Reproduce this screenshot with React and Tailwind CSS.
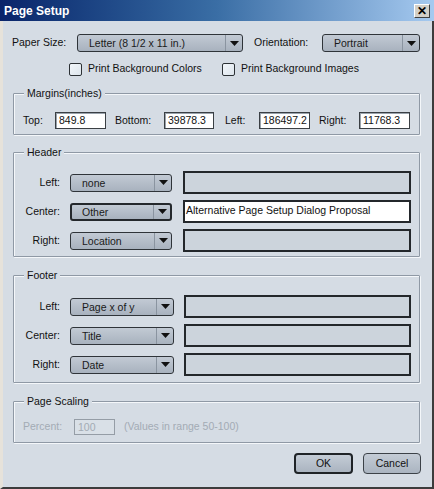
import React from 'react'

const FONT = "font-['Liberation_Sans',Arial,sans-serif]"

function Arrow() {
  return (
    <svg width="9" height="5" viewBox="0 0 9 5">
      <path d="M0 0 H9 L4.5 5 Z" fill="#111" />
    </svg>
  )
}

function Combo({ value, width, focused }) {
  return (
    <div
      className={`flex h-[18px] ${width} items-stretch rounded-[3px] ${
        focused ? 'border-2 border-[#24282c]' : 'border border-[#2f3439]'
      } bg-gradient-to-b from-[#c2cad4] to-[#a8b2be]`}
    >
      <span className={`flex-1 truncate ${focused ? 'pl-[10px] leading-[14px]' : 'pl-[11px] leading-[16px]'} text-[#1a1a1a]`}>
        {value}
      </span>
      <span className="flex w-[17px] items-center justify-center border-l border-[#8a94a0]">
        <Arrow />
      </span>
    </div>
  )
}

function Checkbox({ label }) {
  return (
    <label className="flex items-center">
      <span className="h-[13px] w-[13px] rounded-[2px] border border-[#2c3135] bg-gradient-to-br from-[#f2f6fa] to-[#dde5ec]" />
      <span className="ml-[6px] text-[#111]">{label}</span>
    </label>
  )
}

function Group({ title, className, children }) {
  return (
    <div
      className={`relative rounded-[1px] border border-[#8f99a5] shadow-[inset_1px_1px_0_#f4f7fa,1px_1px_0_#f4f7fa] ${className}`}
    >
      <span className="absolute -top-[8px] left-[10px] bg-[#d5dce4] px-[3px] leading-[14px] text-[#111]">
        {title}
      </span>
      {children}
    </div>
  )
}

function MarginField({ label, labelW, ml, inputW, value }) {
  return (
    <div className={`flex items-center ${ml}`}>
      <span className={`${labelW} text-[#111]`}>{label}</span>
      <span
        className={`h-[17px] ${inputW} border border-[#3a3f44] bg-white pl-[3px] leading-[15px] text-[#111] shadow-[inset_1px_1px_0_#9aa3ac]`}
      >
        {value}
      </span>
    </div>
  )
}

function SlotRow({ label, value, text, focused, comboW, fieldW, fieldMl }) {
  return (
    <div className="flex h-[23px] items-center">
      <span className="w-[46px] text-right text-[#111]">{label}</span>
      <div className="ml-[10px]">
        <Combo value={value} width={comboW} focused={focused} />
      </div>
      <div
        className={`${fieldMl} h-[23px] ${fieldW} border-2 border-[#23272b] ${
          text ? 'bg-white' : 'bg-[#ccd4dc]'
        } pl-[1px] leading-[17px] text-[#111]`}
      >
        {text}
      </div>
    </div>
  )
}

export default function App() {
  return (
    <div
      className={`${FONT} flex h-[489px] w-[434px] flex-col border-b-2 border-l-[3px] border-r-2 border-b-[#3c3c3c] border-l-[#e6e2da] border-r-[#3c3c3c] bg-[#d5dce4] text-[10.5px]`}
    >
      {/* title bar */}
      <div className="-ml-[3px] -mr-[2px] flex h-[21px] shrink-0 items-center justify-between bg-gradient-to-r from-[#0a246a] via-[#3a6ea5] to-[#a6caf0] pl-[4px] pr-[4px]">
        <span className="text-[12px] font-bold text-white">Page Setup</span>
        <span className="flex h-[14px] w-[16px] items-center justify-center border border-t-white border-l-white border-r-[#404040] border-b-[#404040] bg-[#d4d0c8] text-[12px] font-bold leading-none text-black">
          ✕
        </span>
      </div>

      <div className="flex flex-1 flex-col pl-[10px] pr-[12px]">
        {/* paper size / orientation */}
        <div className="-ml-px mt-[13px] flex h-[18px] items-center">
          <span className="w-[65px] text-[#111]">Paper Size:</span>
          <Combo value="Letter (8 1/2 x 11 in.)" width="w-[166px]" />
          <span className="ml-[11px] w-[68px] text-[#111]">Orientation:</span>
          <Combo value="Portrait" width="w-[98px]" />
        </div>

        {/* checkboxes */}
        <div className="ml-[56px] mt-[10px] flex h-[14px] items-center">
          <div className="w-[153px]">
            <Checkbox label="Print Background Colors" />
          </div>
          <Checkbox label="Print Background Images" />
        </div>

        {/* margins */}
        <Group title="Margins(inches)" className="mt-[17px] pb-[5px] pl-[9px] pt-[18px]">
          <div className="flex h-[17px] items-center">
            <MarginField label="Top:" labelW="w-[32px]" ml="" inputW="w-[51px]" value="849.8" />
            <MarginField label="Bottom:" labelW="w-[49px]" ml="ml-[9px]" inputW="w-[50px]" value="39878.3" />
            <MarginField label="Left:" labelW="w-[34px]" ml="ml-[11px]" inputW="w-[51px]" value="186497.2" />
            <MarginField label="Right:" labelW="w-[40px]" ml="ml-[9px]" inputW="w-[51px]" value="11768.3" />
          </div>
        </Group>

        {/* header */}
        <Group title="Header" className="mt-[17px] flex flex-col gap-[6px] pb-[4px] pt-[18px]">
          <SlotRow label="Left:" value="none" comboW="w-[102px]" fieldW="w-[228px]" fieldMl="ml-[11px]" />
          <SlotRow
            label="Center:"
            value="Other"
            focused
            text="Alternative Page Setup Dialog Proposal"
            comboW="w-[102px]"
            fieldW="w-[228px]"
            fieldMl="ml-[11px]"
          />
          <SlotRow label="Right:" value="Location" comboW="w-[102px]" fieldW="w-[228px]" fieldMl="ml-[11px]" />
        </Group>

        {/* footer */}
        <Group title="Footer" className="mt-[18px] flex flex-col gap-[6px] pb-[6px] pt-[19px]">
          <SlotRow label="Left:" value="Page x of y" comboW="w-[104px]" fieldW="w-[227px]" fieldMl="ml-[10px]" />
          <SlotRow label="Center:" value="Title" comboW="w-[104px]" fieldW="w-[227px]" fieldMl="ml-[10px]" />
          <SlotRow label="Right:" value="Date" comboW="w-[104px]" fieldW="w-[227px]" fieldMl="ml-[10px]" />
        </Group>

        {/* page scaling */}
        <Group title="Page Scaling" className="mt-[18px] pb-[7px] pl-[9px] pt-[17px]">
          <div className="flex h-[16px] items-center text-[#a3abb4]">
            <span className="w-[51px]">Percent:</span>
            <span className="h-[16px] w-[41px] border border-[#959da6] bg-[#d9e0e7] pl-[3px] leading-[14px]">100</span>
            <span className="ml-[9px]">(Values in range 50-100)</span>
          </div>
        </Group>

        {/* buttons */}
        <div className="-mr-px mt-[10px] flex justify-end gap-[10px]">
          <button className="h-[21px] w-[59px] rounded-[4px] border-2 border-[#1f2327] bg-gradient-to-b from-[#c4ccd6] to-[#aab4c0] text-[#111]">
            OK
          </button>
          <button className="h-[21px] w-[58px] rounded-[4px] border border-[#3c4248] bg-gradient-to-b from-[#c4ccd6] to-[#aab4c0] text-[#111]">
            Cancel
          </button>
        </div>
      </div>
    </div>
  )
}
